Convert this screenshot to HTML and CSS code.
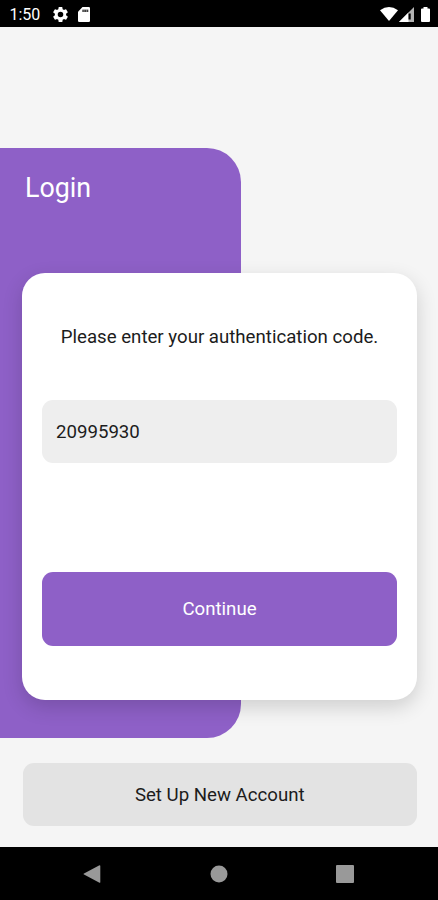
FILE: index.html
```html
<!DOCTYPE html>
<html lang="en">
<head>
<meta charset="utf-8">
<title>Login</title>
<link rel="stylesheet" href="styles.css">
</head>
<body>
<div class="phone">
  <header class="status">
    <span class="clock">1:50</span>
    <svg class="gear" width="15" height="15" viewBox="2 2 20 20"><path fill="#fff" fill-rule="evenodd" d="M19.400 13a7.500 7.500 0 0 0 0-2l2.100-1.650a.5.5 0 0 0 .12-.64l-2-3.460a.5.5 0 0 0-.61-.22l-2.490 1a7.300 7.300 0 0 0-1.690-.98l-.38-2.650A.49.49 0 0 0 14 2h-4a.49.49 0 0 0-.49.42l-.38 2.650c-.61.25-1.170.59-1.690.98l-2.490-1a.49.49 0 0 0-.61.22l-2 3.460a.49.49 0 0 0 .12.64L4.570 11a7.900 7.900 0 0 0 0 2l-2.110 1.650a.5.5 0 0 0-.12.640l2 3.460c.12.22.39.3.61.22l2.490-1c.52.4 1.080.73 1.690.98l.38 2.650c.03.24.24.42.49.42h4c.25 0 .46-.18.49-.42l.38-2.650a7.700 7.700 0 0 0 1.690-.98l2.490 1c.23.09.49 0 .61-.22l2-3.460a.5.5 0 0 0-.12-.64zM12 15.700a3.700 3.700 0 1 1 0-7.400 3.700 3.700 0 0 1 0 7.400z"/></svg>
    <svg class="sd" width="12" height="15" viewBox="0 0 12 15"><path fill="#fff" d="M4.500 0h6.200Q12 0 12 1.300v12.400Q12 15 10.700 15H1.300Q0 15 0 13.700V4.700z"/><path fill="#000" fill-opacity=".75" d="M4.300 2.600h6v2.400h-6z"/><path fill="#fff" fill-opacity=".5" d="M5.700 2.600h.7V5h-.7zm2.300 0h.7V5H8z"/></svg>
    <span class="spacer"></span>
    <svg class="wifi" width="18" height="14" viewBox="0 0 18 14"><path fill="#fff" d="M0 3.200Q9-3.200 18 3.200L9 14z"/></svg>
    <svg class="signal" width="15" height="15" viewBox="0 0 15 15"><path fill="#fff" fill-opacity=".7" d="M0 15 15 0v15z"/><path fill="#fff" d="M0 15 9.500 5.500V15z"/><path fill="#000" d="M9.500 6.500h2.200v6H9.500z"/></svg>
    <svg class="battery" width="9" height="15" viewBox="0 0 9 15"><path fill="#fff" d="M2.500 0h4v1.500H8q1 0 1 1V14q0 1-1 1H1q-1 0-1-1V2.500q0-1 1-1h1.500z"/></svg>
  </header>
  <main class="screen">
    <section class="panel"><h1 class="title">Login</h1></section>
    <section class="card">
      <p class="prompt">Please enter your authentication code.</p>
      <div class="field">20995930</div>
      <div class="continue">Continue</div>
    </section>
    <div class="setup">Set Up New Account</div>
  </main>
  <nav class="nav">
    <svg width="18" height="18" viewBox="0 0 18 18"><path fill="#999" d="M16 .5q1.300-.7 1.300.6v15.800q0 1.300-1.300.6L1 9.600q-1-.6 0-1.200z"/></svg>
    <svg width="18" height="18" viewBox="0 0 18 18"><circle cx="9" cy="9" r="8.500" fill="#999"/></svg>
    <svg width="18" height="18" viewBox="0 0 18 18"><rect width="18" height="18" rx="1" fill="#999"/></svg>
  </nav>
</div>
</body>
</html>
```
FILE: styles.css
```css
* { box-sizing: border-box; }
body { margin: 0; font-family: Roboto, sans-serif; color: #1c1c1c; }
.phone { width: 438px; height: 900px; display: flex; flex-direction: column; overflow: hidden; background: #f5f5f5; }
.status { height: 27px; flex: none; background: #000; color: #fff; display: flex; align-items: center; padding: 1px 8.500px 0 9.500px; }
.clock { font-size: 16px; line-height: 26px; padding-top: 1px; font-weight: 400; width: 43px; }
.sd { margin-left: 10.500px; }
.spacer { flex: 1; }
.wifi { margin-right: .5px; }
.battery { margin: 0 0 0 7px; }
.screen { height: 820px; flex: none; display: grid; grid-template-columns: 438px; grid-template-rows: 736.400px 63px; align-items: start; }
.panel { grid-area: 1 / 1; width: 241.400px; height: 590.400px; margin-top: 121px; padding: 23px 25px; background: #8e60c7; border-radius: 0 34px 34px 0; }
.title { margin: 0; color: #fff; font-size: 26.800px; line-height: 34px; font-weight: 400; }
.card { grid-area: 1 / 1; margin: 246px 21.500px 0 22px; height: 427px; padding: 51px 19.500px 0 20px; background: #fff; border-radius: 23px; box-shadow: 0 7px 20px rgba(0, 0, 0, .16); display: flex; flex-direction: column; }
.prompt { margin: 0; text-align: center; font-size: 18.650px; line-height: 27px; white-space: nowrap; }
.field { margin-top: 49.400px; height: 63px; padding: 0 14px; line-height: 64px; font-size: 18.650px; background: #eee; border-radius: 11px; }
.continue { margin-top: 108.200px; height: 74.500px; line-height: 75px; font-size: 18.650px; text-align: center; color: #fff; background: #8e60c7; border-radius: 11px; }
.setup { grid-row: 2; margin: 0 21.500px 0 23px; height: 63px; line-height: 64px; font-size: 18.650px; text-align: center; background: #e3e3e3; border-radius: 11px; }
.nav { height: 53px; flex: none; background: #000; display: flex; justify-content: space-between; align-items: center; padding: 0 84px 0 83px; }
```
